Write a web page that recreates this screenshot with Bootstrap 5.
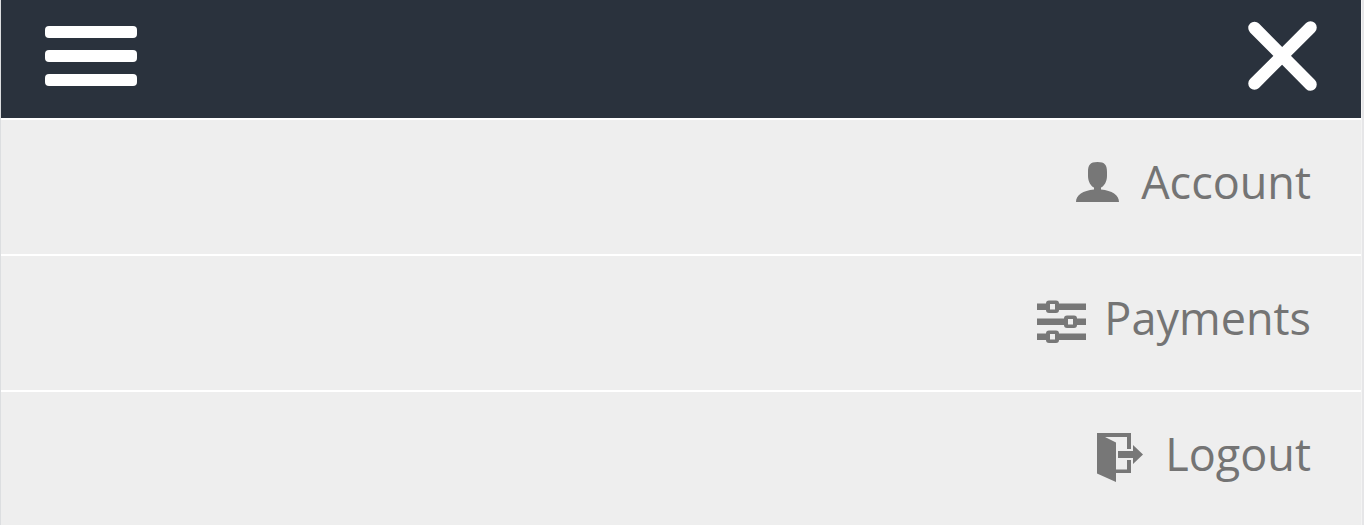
<!DOCTYPE html>
<html lang="en">
<head>
<meta charset="utf-8">
<meta name="viewport" content="width=device-width, initial-scale=1">
<title>Menu</title>
<link href="https://cdn.jsdelivr.net/npm/bootstrap@5.3.0/dist/css/bootstrap.min.css" rel="stylesheet">
<style>
body { background: #e6e6e8; font-family: "Open Sans", sans-serif; }
.panel { background: #eee; border-left: 1px solid #dcdee0; border-right: 1px solid #f4f4f4; margin-right: 2px; }
.topbar { background: #2a323d; height: 118px; padding: 0 44px 6px; }
.menu-item { border-top: 2px solid #fff; color: #747474; font-size: 45px; line-height: 64px; padding: 30px 50px 40px; gap: 22px; }
.menu-item:hover { color: #555; }
.menu-item svg { fill: #777; }
.menu-wide { gap: 18px; }
.menu-last { padding-bottom: 36px; }
</style>
</head>
<body>
<div class="panel min-vh-100 d-flex flex-column">
  <header class="topbar d-flex align-items-center justify-content-between">
    <button type="button" class="btn p-0 border-0 d-flex" aria-label="Menu">
      <svg width="92" height="60" viewBox="0 0 92 60" fill="#fff"><rect width="92" height="12" rx="4"/><rect y="24" width="92" height="12" rx="4"/><rect y="48" width="92" height="12" rx="4"/></svg>
    </button>
    <button type="button" class="btn p-0 border-0 d-flex" aria-label="Close">
      <svg width="70" height="70" viewBox="0 0 70 70" stroke="#fff" stroke-width="12.500" stroke-linecap="round"><path d="M7.500 7L63.500 63.500M63.500 6.500L7.500 62.500"/></svg>
    </button>
  </header>
  <nav class="flex-grow-1 d-flex flex-column" aria-label="Account menu">
    <a href="#" class="menu-item d-flex align-items-center justify-content-end text-decoration-none">
      <svg width="43" height="40" viewBox="0 0 43 40"><path d="M21.500 0C29 0 31 3 31 10V14C31 19.500 28 24.500 25 25.500V27.500C36 28.500 43 33 43 40H0C0 33 7 28.500 18 27.500V25.500C15 24.500 12 19.500 12 14V10C12 3 14 0 21.500 0Z"/></svg>
      <span>Account</span>
    </a>
    <a href="#" class="menu-item menu-wide d-flex align-items-center justify-content-end text-decoration-none">
      <svg width="49" height="52" viewBox="0 -8 49 52"><path d="M0 3.500H49V10H0ZM0 18.500H49V25H0ZM0 33.500H49V40H0Z"/><g><rect x="9" y="0.500" width="13" height="12.500" rx="3"/><rect x="27" y="15.500" width="13" height="12.500" rx="3"/><rect x="9" y="30.500" width="13" height="12.500" rx="3"/></g><g fill="#eee"><rect x="13" y="4" width="5" height="5.500"/><rect x="31" y="19" width="5" height="5.500"/><rect x="13" y="34" width="5" height="5.500"/></g></svg>
      <span>Payments</span>
    </a>
    <a href="#" class="menu-item menu-last flex-grow-1 d-flex align-items-start justify-content-end text-decoration-none">
      <svg class="mt-2" width="46" height="52" viewBox="0 -3 46 52"><path d="M0 0H34V16H30V4H8L19 9.500V36.500H30V27H34V40H19V49L0 40.500Z"/><path d="M21 18H36V12L46 21.500L36 31V25H21Z"/></svg>
      <span>Logout</span>
    </a>
  </nav>
</div>
<script src="https://cdn.jsdelivr.net/npm/bootstrap@5.3.0/dist/js/bootstrap.bundle.min.js"></script>
</body>
</html>
